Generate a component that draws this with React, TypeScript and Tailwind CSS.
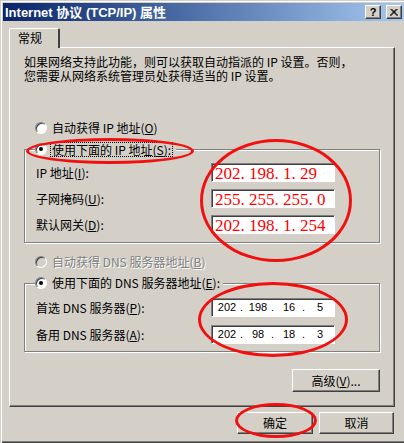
import React from "react";

const raised =
  "border border-t-white border-l-white border-r-[#404040] border-b-[#404040] shadow-[inset_-1px_-1px_0_#808080]";
const sunken =
  "border border-t-[#808080] border-l-[#808080] border-r-white border-b-white shadow-[inset_1px_1px_0_#404040]";
const etched = "border border-[#808080] shadow-[inset_1px_1px_0_#fff,1px_1px_0_#fff]";

function Radio({ checked = false, disabled = false }: { checked?: boolean; disabled?: boolean }) {
  return (
    <span
      className={`flex items-center justify-center w-3 h-3 shrink-0 rounded-full ${sunken} ${
        disabled ? "bg-[#d4d0c8]" : "bg-white"
      }`}
    >
      {checked && <span className="w-1 h-1 rounded-full bg-black" />}
    </span>
  );
}

function IpBox({ value, red }: { value: string | string[]; red?: boolean }) {
  return (
    <div className={`w-[124px] h-[19px] bg-white flex items-center ${sunken}`}>
      {red ? (
        <span className="pl-[3px] pt-[2px] whitespace-pre font-['Liberation_Serif',serif] text-[17px] leading-none text-[#ff0000]">
          {value}
        </span>
      ) : (
        <div className="flex pl-[2px] font-['Liberation_Sans',sans-serif] text-[11px] text-black">
          {(value as string[]).map((v, i) => (
            <div key={i} className="flex">
              <span className="w-[26px] text-center">{v}</span>
              <span className="w-[5px]">{i < 3 ? "." : ""}</span>
            </div>
          ))}
        </div>
      )}
    </div>
  );
}

function Row({ label, children }: { label: React.ReactNode; children: React.ReactNode }) {
  return (
    <div className="flex items-center h-[19px]">
      <span className="w-[176px] pl-px">{label}</span>
      {children}
    </div>
  );
}

function Ellipse({ cls }: { cls: string }) {
  return (
    <div className={`absolute pointer-events-none rounded-[50%] border-[3px] border-[#f01010] ${cls}`} />
  );
}

export default function App() {
  return (
    <div className="relative w-[404px] h-[443px] overflow-hidden bg-[#d4d0c8] pl-[3px] pt-[3px] shadow-[inset_1px_1px_0_#d4d0c8,inset_2px_2px_0_#fff,inset_0_-1px_0_#404040,inset_0_-2px_0_#808080] font-['Noto_Sans_CJK_SC',sans-serif] text-[12px] text-black">
      {/* title bar */}
      <div className="h-[18px] flex items-center justify-between pr-[2px] bg-gradient-to-r from-[#0a246a] to-[#a6caf0]">
        <span className="pl-[2px] font-bold text-white text-[13px] leading-none font-['Liberation_Sans','Noto_Sans_CJK_SC',sans-serif]">
          Internet 协议 (TCP/IP) 属性
        </span>
        <div className="flex gap-[5px]">
          <div className={`w-4 h-[14px] bg-[#d4d0c8] flex items-center justify-center font-bold text-[11px] leading-none font-['Liberation_Sans',sans-serif] ${raised}`}>
            ?
          </div>
          <div className={`w-4 h-[14px] bg-[#d4d0c8] flex items-center justify-center ${raised}`}>
            <svg width="8" height="7" viewBox="0 0 8 7">
              <path d="M0.5 0 L7.5 7 M1.5 0 L8 6.5 M7.5 0 L0.5 7 M6.5 0 L0 6.5" stroke="#000" strokeWidth="1" />
            </svg>
          </div>
        </div>
      </div>

      {/* tab */}
      <div className="ml-[6px] mt-[7px] relative z-10 -mb-px w-[51px] h-[20px] bg-[#d4d0c8] border-l border-t border-white border-r-2 border-r-[#404040] rounded-t-[2px] pl-[8px] pt-[2px] leading-[14px]">
        常规
      </div>

      {/* tab page */}
      <div className={`ml-[6px] w-[386px] h-[360px] ${raised}`}>
        <div className="px-[14px]">
          <p className="pt-[7px] leading-[14px]">
            如果网络支持此功能，则可以获取自动指派的 IP 设置。否则，
            <br />
            您需要从网络系统管理员处获得适当的 IP 设置。
          </p>

          <div className="mt-[37px] pl-[11px] flex items-center h-4 gap-[5px]">
            <Radio />
            <span>
              自动获得 IP 地址(<u>O</u>)
            </span>
          </div>

          <fieldset className={`mt-[5px] w-[356px] px-[10px] pb-[8px] ${etched}`}>
            <legend className="bg-[#d4d0c8] pr-[3px]">
              <div className="flex items-center h-4 gap-[3px]">
                <Radio checked />
                <span className="border border-dotted border-black px-px leading-[13px]">
                  使用下面的 IP 地址(<u>S</u>):
                </span>
              </div>
            </legend>
            <div className="mt-[6px] flex flex-col gap-[7px]">
              <Row label={<>IP 地址(<u>I</u>):</>}>
                <IpBox red value="202. 198. 1. 29" />
              </Row>
              <Row label={<>子网掩码(<u>U</u>):</>}>
                <IpBox red value="255. 255. 255. 0" />
              </Row>
              <Row label={<>默认网关(<u>D</u>):</>}>
                <IpBox red value="202. 198. 1. 254" />
              </Row>
            </div>
          </fieldset>

          <div className="mt-[11px] pl-[11px] flex items-center h-4 gap-[5px] text-[#808080] [text-shadow:1px_1px_0_#fff]">
            <Radio disabled />
            <span>
              自动获得 DNS 服务器地址(<u>B</u>)
            </span>
          </div>

          <fieldset className={`mt-[5px] w-[356px] px-[10px] pb-[7px] ${etched}`}>
            <legend className="bg-[#d4d0c8] pr-[3px]">
              <div className="flex items-center h-4 gap-[5px]">
                <Radio checked />
                <span>
                  使用下面的 DNS 服务器地址(<u>E</u>):
                </span>
              </div>
            </legend>
            <div className="mt-[7px] flex flex-col gap-[8px]">
              <Row label={<>首选 DNS 服务器(<u>P</u>):</>}>
                <IpBox value={["202", "198", "16", "5"]} />
              </Row>
              <Row label={<>备用 DNS 服务器(<u>A</u>):</>}>
                <IpBox value={["202", "98", "18", "3"]} />
              </Row>
            </div>
          </fieldset>

          <div className="mt-[17px] w-[356px] flex justify-end">
            <button className={`w-[88px] h-[23px] bg-[#d4d0c8] ${raised}`}>
              高级(<u>V</u>)...
            </button>
          </div>
        </div>
      </div>

      {/* dialog buttons */}
      <div className="mt-[5px] flex justify-end gap-[6px] pr-[10px]">
        <button className={`w-[76px] h-[22px] bg-[#d4d0c8] ${raised}`}>确定</button>
        <button className={`w-[75px] h-[22px] bg-[#d4d0c8] ${raised}`}>取消</button>
      </div>

      {/* red annotations */}
      <Ellipse cls="left-[26px] top-[138px] w-[168px] h-[26px]" />
      <Ellipse cls="left-[200px] top-[139px] w-[152px] h-[123px]" />
      <Ellipse cls="left-[198px] top-[282px] w-[150px] h-[75px]" />
      <Ellipse cls="left-[235px] top-[403px] w-[82px] h-[35px]" />
    </div>
  );
}
